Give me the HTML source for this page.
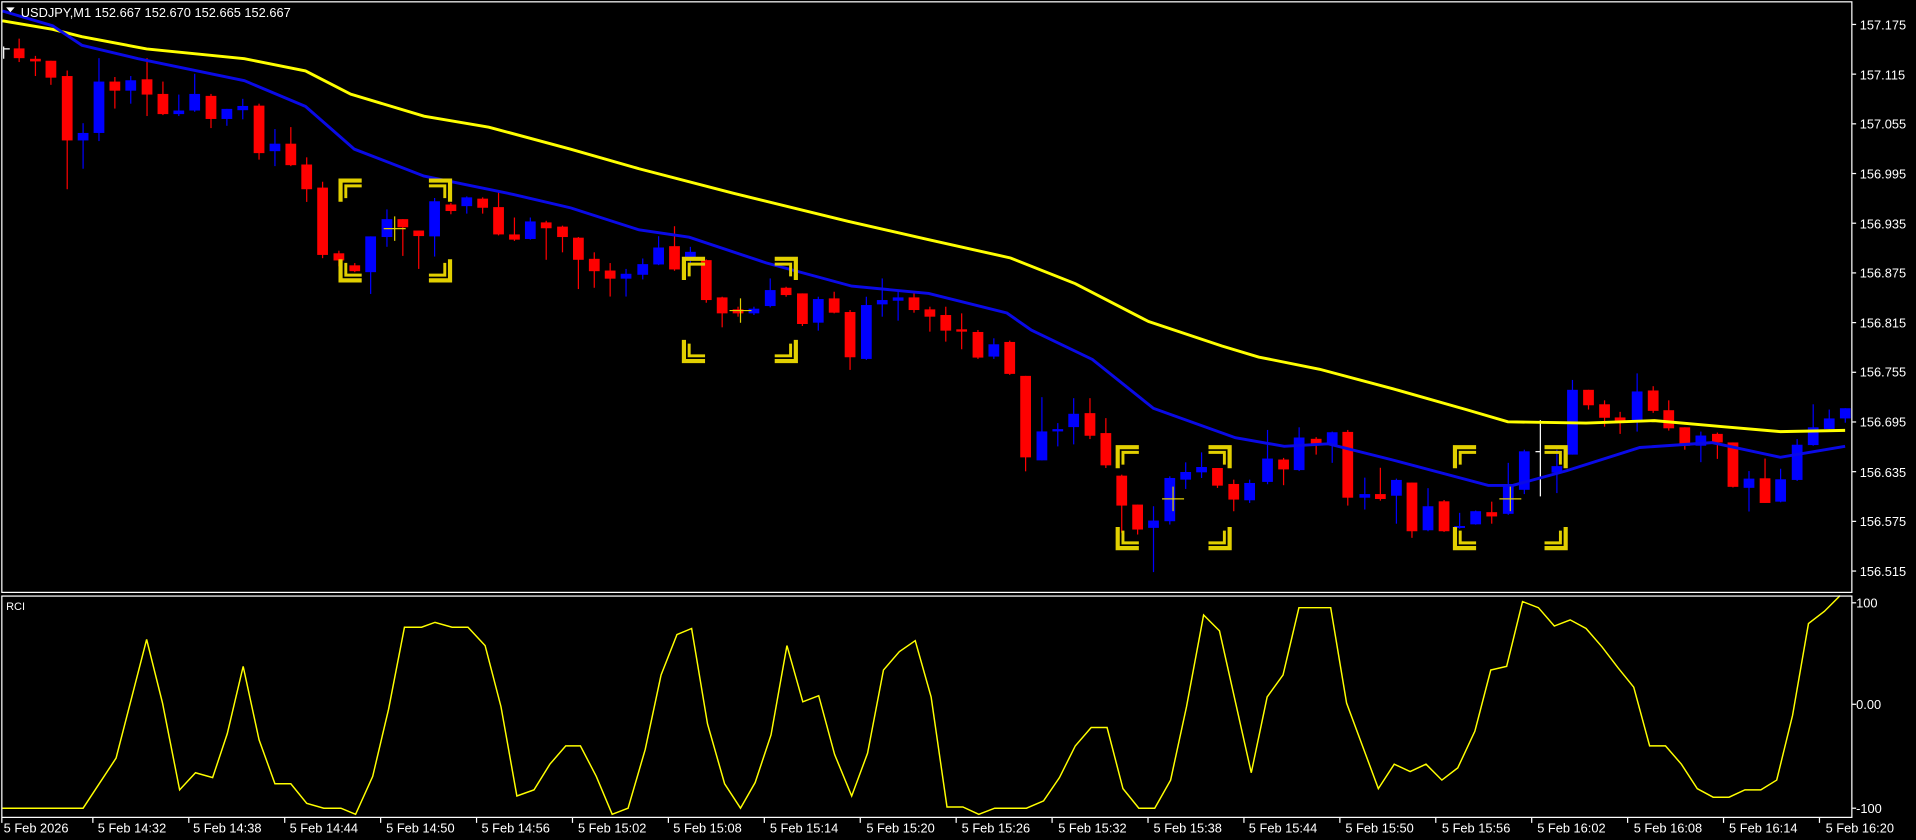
<!DOCTYPE html>
<html><head><meta charset="utf-8"><style>
html,body{margin:0;padding:0;background:#000;overflow:hidden}
svg{display:block}
text{font-family:"Liberation Sans",sans-serif;fill:#fff;font-size:10.5px}
</style></head><body>
<svg id="c" width="1916" height="840" viewBox="0 0 1568 687" preserveAspectRatio="none" xmlns="http://www.w3.org/2000/svg">
<rect width="1568" height="687" fill="#000"/>
<g id="cand"></g>
<polyline id="ma1" fill="none" stroke="#ffff00" stroke-width="2.4" points=""/>
<polyline id="ma2" fill="none" stroke="#0a0ae6" stroke-width="2.4" points=""/>
<g id="br" fill="none" stroke="#e2d000"></g>
<g id="ch" stroke="#e2d000" stroke-width="1"></g>
<polyline id="rci" fill="none" stroke="#ffff00" stroke-width="1.2" points=""/>
<!-- frames -->
<rect x="1.5" y="1.5" width="1514" height="483" fill="none" stroke="#fff" stroke-width="1"/>
<rect x="1.5" y="487.5" width="1514" height="181" fill="none" stroke="#fff" stroke-width="1"/>
<path d="M5 6 L12 6 L8.5 10 Z" fill="#fff"/>
<text x="17" y="14">USDJPY,M1  152.667 152.670 152.665 152.667</text>
<path d="M3 38 V48 M3 40 H8" stroke="#fff" stroke-width="1"/>
<text x="5" y="499" style="font-size:9px">RCI</text>
<g id="ticks" stroke="#fff" stroke-width="1"></g>
<text x="1522" y="24">157.175</text>
<text x="1522" y="65">157.115</text>
<text x="1522" y="105">157.055</text>
<text x="1522" y="146">156.995</text>
<text x="1522" y="187">156.935</text>
<text x="1522" y="227">156.875</text>
<text x="1522" y="268">156.815</text>
<text x="1522" y="308">156.755</text>
<text x="1522" y="349">156.695</text>
<text x="1522" y="390">156.635</text>
<text x="1522" y="430">156.575</text>
<text x="1522" y="471">156.515</text>
<text x="1519" y="497">100</text>
<text x="1519" y="580">0.00</text>
<text x="1519" y="665">-100</text>
<text x="3" y="681">5 Feb 2026</text>
<text x="80" y="681">5 Feb 14:32</text>
<text x="158" y="681">5 Feb 14:38</text>
<text x="237" y="681">5 Feb 14:44</text>
<text x="316" y="681">5 Feb 14:50</text>
<text x="394" y="681">5 Feb 14:56</text>
<text x="473" y="681">5 Feb 15:02</text>
<text x="551" y="681">5 Feb 15:08</text>
<text x="630" y="681">5 Feb 15:14</text>
<text x="709" y="681">5 Feb 15:20</text>
<text x="787" y="681">5 Feb 15:26</text>
<text x="866" y="681">5 Feb 15:32</text>
<text x="944" y="681">5 Feb 15:38</text>
<text x="1022" y="681">5 Feb 15:44</text>
<text x="1101" y="681">5 Feb 15:50</text>
<text x="1180" y="681">5 Feb 15:56</text>
<text x="1258" y="681">5 Feb 16:02</text>
<text x="1337" y="681">5 Feb 16:08</text>
<text x="1415" y="681">5 Feb 16:14</text>
<text x="1494" y="681">5 Feb 16:20</text>
</svg>
<script>
var NS="http://www.w3.org/2000/svg";
function el(p,t,a){var e=document.createElementNS(NS,t);for(var k in a)e.setAttribute(k,a[k]);p.appendChild(e);return e;}
var z3=[[47,'R',130,160,100,172],[87,'R',162,170,153,215],[125,'R',168,220,168,242],[165,'R',215,413,198,563],[204,'B',390,413,360,500],[243,'B',232,390,160,415],[282,'R',232,260,218,315],[321,'B',228,260,215,300],[361,'R',225,272,160,338],[400,'R',270,332,232,335],[439,'B',321,332,272,338],[478,'B',270,321,208,325],[518,'R',276,347,270,375],[557,'B',316,347,316,368],[596,'B',307,320,285,348],[636,'R',306,452,300,472],[675,'B',423,446,378,492],[714,'R',423,489,372,492],[753,'R',487,563,465,602],[792,'R',558,765,540,775],[832,'R',760,782,752,800],[871,'R',797,815,790,818],[910,'B',708,818,708,885],[950,'B',655,710,625,740],[989,'R',655,680,655,768],[1028,'R',690,707,690,808],[1067,'B',600,708,590,770],[1107,'R',610,630,605,640],[1146,'B',588,615,585,638],[1185,'R',592,620,588,638],[1224,'R',618,702,573,705],[1263,'R',702,718,650,722],[1302,'B',662,716,650,718],[1341,'R',665,683,660,780],[1381,'R',678,710,675,757],[1420,'R',712,780,710,870],[1459,'R',777,815,757,866],[1498,'R',813,838,790,893],[1537,'B',823,838,808,893]];
var z4=[[57,'B',342,374,325,388],[96,'B',292,343,258,345],[135,'R',288,358,228,362],[174,'B',305,330,290,340],[213,'R',330,450,328,458],[252,'R',442,490,440,532],[291,'R',478,490,470,500],[330,'B',476,490,470,495],[370,'B',420,468,385,472],[409,'R',413,435,410,440],[449,'R',430,522,430,528],[488,'B',447,518,440,542],[527,'R',445,488,425,490],[566,'R',486,622,480,660],[606,'B',465,627,440,630],[645,'B',450,463,385,500],[684,'B',442,452,420,512],[723,'R',442,480,430,488],[762,'R',478,500,470,545],[801,'R',495,542,470,575],[840,'R',538,545,490,598],[880,'R',546,623,540,627],[919,'B',583,620,565,627],[958,'R',576,672,572,675],[997,'R',678,923,678,965],[1037,'B',845,932,742,932],[1076,'B',838,845,820,890],[1115,'B',792,832,745,884],[1155,'R',790,858,745,868],[1194,'R',850,947,805,955],[1233,'R',978,1068,975,1150],[1272,'R',1065,1140,1065,1155],[1311,'B',1113,1135,1070,1268],[1351,'B',985,1115,980,1125],[1390,'B',967,990,938,1018],[1429,'B',952,968,908,985],[1468,'R',955,1008,955,1015],[1508,'R',1003,1050,990,1085],[1547,'B',1000,1052,990,1060]];
var z5=[[345,'B',357,428,270,435],[378,'R',360,390,355,438],[410,'B',293,392,262,395],[445,'R',297,312,292,345],[478,'B',277,315,275,370],[510,'R',276,476,270,500],[545,'B',465,476,415,512],[577,'R',465,480,385,485],[610,'B',422,470,418,555],[642,'R',430,578,430,598],[675,'B',502,575,447,578],[708,'R',487,578,483,580],[740,'B',562,568,522,570],[773,'B',517,557,515,558],[806,'R',520,533,488,555],[840,'B',440,525,370,528],[873,'B',335,452,330,465],[906,'W',336,340,240,472],[940,'B',380,400,330,462],[972,'B',148,345,118,345],[1005,'R',148,195,148,208],[1038,'R',192,233,180,260],[1070,'R',232,245,215,282],[1105,'B',153,240,98,275],[1138,'R',150,212,137,218],[1170,'R',210,265,180,272],[1203,'R',262,318,262,330],[1236,'B',287,318,275,368],[1270,'R',282,308,278,358],[1302,'R',308,443,308,445],[1335,'B',418,446,395,518],[1368,'R',417,492,357,492],[1400,'B',420,488,388,490],[1434,'B',315,422,298,425],[1467,'B',262,316,192,318],[1500,'B',235,267,208,270],[1533,'B',204,235,204,248]];
var C=[];
z3.forEach(function(d){C.push([d[0]/3,d[1],5+.266*d[2],5+.266*d[3],5+.266*d[4],5+.266*d[5]]);});
z4.forEach(function(d){C.push([507+d[0]/3,d[1],123+.272*d[2],123+.272*d[3],123+.272*d[4],123+.272*d[5]]);});
z5.forEach(function(d){C.push([900+.398*d[0],d[1],279+.269*d[2],279+.269*d[3],279+.269*d[4],279+.269*d[5]]);});
var g=document.getElementById('cand');
C.forEach(function(c){var col=c[1]=='R'?'#ff0000':(c[1]=='B'?'#0000ff':'#ffffff');
 el(g,'line',{x1:c[0],x2:c[0],y1:c[4],y2:c[5],stroke:col,'stroke-width':1});
 if(c[1]!='W') el(g,'rect',{x:c[0]-4.4,y:c[2],width:8.8,height:Math.max(1.5,c[3]-c[2]),fill:col});
 else el(g,'line',{x1:c[0]-4,x2:c[0],y1:c[2],y2:c[2],stroke:col,'stroke-width':1});
});
document.getElementById('ma1').setAttribute('points',"2,17 43,24 67,30 120,40 200,48 250,58 287,77 347,95 400,104 467,122 523,138 600,158 694,181 760,196 827,211 880,232 940,263 1000,283 1030,292 1080,302 1140,318 1200,335 1234,345 1298,346 1354,344 1410,349 1457,353 1510,352");
document.getElementById('ma2').setAttribute('points',"2,9 43,21 67,37 113,48 200,66 250,87 290,122 347,144 420,159 467,170 523,188 564,194 627,215 697,234 760,240 824,256 844,270 894,294 944,334 1011,358 1051,365 1087,363 1139,376 1218,397 1238,397 1282,385 1342,366 1401,362 1457,374 1510,365");
document.getElementById('rci').setAttribute('points',"2,661 68,661 95,620 120,523 133,575 147,646 160,632 174,636 186,600 199,545 212,605 225,641 238,641 251,657 265,661 279,661 291,666 305,635 318,580 331,513 345,513 356,509 370,513 383,513 397,528 410,578 423,651 437,646 450,625 463,610 475,610 488,635 501,666 514,661 528,613 541,552 554,519 566,514 579,592 593,641 606,661 618,640 631,601 644,528 657,574 670,569 683,617 697,651 710,616 723,548 736,533 749,524 762,570 775,660 788,660 801,666 814,661 840,661 854,655 867,636 880,610 893,595 906,595 919,645 932,661 945,661 958,638 971,578 985,503 998,516 1024,632 1037,570 1050,552 1063,497 1089,497 1102,575 1115,610 1128,645 1141,625 1154,631 1167,625 1180,638 1193,628 1207,598 1220,548 1233,545 1246,492 1259,497 1272,512 1285,507 1298,514 1311,529 1324,546 1337,562 1350,610 1363,610 1376,625 1389,645 1402,652 1415,652 1428,646 1441,646 1454,638 1467,585 1480,510 1493,500 1506,487");
var br=document.getElementById('br');
function corner(x,y,sx,sy){var L=19;
 el(br,'path',{d:'M'+(x+sx*1.7)+' '+(y+sy*L)+' V'+(y+sy*1.7)+' H'+(x+sx*L),'stroke-width':3.4});
 el(br,'path',{d:'M'+(x+sx*6)+' '+(y+sy*(L-3))+' V'+(y+sy*6)+' H'+(x+sx*L),'stroke-width':2.4});}
[[277,146,370,231],[558,210,653,297],[913,364,1008,450],[1189,364,1283,450]].forEach(function(b){
 corner(b[0],b[1],1,1);corner(b[2],b[1],-1,1);corner(b[0],b[3],1,-1);corner(b[2],b[3],-1,-1);});
var ch=document.getElementById('ch');
[[323,187],[606,254],[960,408],[1236,408]].forEach(function(p){
 el(ch,'path',{d:'M'+(p[0]-9)+' '+p[1]+' H'+(p[0]+9)+' M'+p[0]+' '+(p[1]-10)+' V'+(p[1]+10)});});
var tk=document.getElementById('ticks');
for(var i=0;i<12;i++){var y=20+i*40.64;el(tk,'line',{x1:1516,x2:1519,y1:y,y2:y});}
[493,576,661].forEach(function(y){el(tk,'line',{x1:1516,x2:1519,y1:y,y2:y});});
for(var i=0;i<20;i++){var x=(i==0?1.5:76+(i-1)*78.5);el(tk,'line',{x1:x,x2:x,y1:669,y2:673});}
</script>
</body></html>
